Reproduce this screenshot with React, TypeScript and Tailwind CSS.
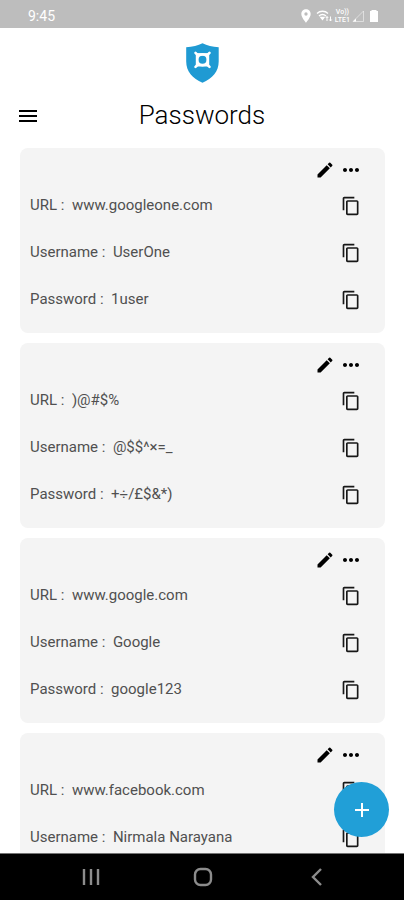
import { MdAdd, MdContentCopy, MdLocationOn, MdMenu, MdModeEdit, MdMoreHoriz } from "react-icons/md";

type Entry = {
  url: string;
  username: string;
  password?: string;
};

const entries: Entry[] = [
  { url: "www.googleone.com", username: "UserOne", password: "1user" },
  { url: ")@#$%", username: "@$$^×=_", password: "+÷/£$&*)" },
  { url: "www.google.com", username: "Google", password: "google123" },
  { url: "www.facebook.com", username: "Nirmala Narayana" },
];

function StatusBar() {
  return (
    <div className="flex h-7 shrink-0 items-center justify-between bg-[#bdbdbd] pt-1 pr-6 pl-7 text-white">
      <span className="text-sm font-normal">9:45</span>
      <div className="flex items-center gap-0.5">
        <MdLocationOn size={16} />
        <svg width="17" height="12" viewBox="0 0 17 12" fill="none" stroke="currentColor" strokeWidth="1.3">
          <path d="M1 3.500C4 .5 9 .5 12 3.500M3 6c2-2 5-2 7 0" />
          <path d="M5 7.500l1.500 2L8 7.500z" fill="currentColor" />
          <path d="M11 11V6.500M9.800 8L11 6.500 12.200 8M14.500 6.500V11M13.300 9.500l1.200 1.500 1.200-1.500" strokeWidth="1" />
        </svg>
        <div className="flex flex-col items-center text-[7px] leading-[8px] font-medium">
          <span>Vo))</span>
          <span>LTE1</span>
        </div>
        <svg width="12" height="12" viewBox="0 0 12 12">
          <path d="M11.500 1v10.500H1z" fill="none" stroke="currentColor" opacity=".5" />
          <path d="M4 8.500v3H1z" fill="currentColor" />
        </svg>
        <svg width="14" height="12" viewBox="0 0 14 12" fill="currentColor">
          <path d="M5.500 0h5v1H12v11H4V1h1.500z" />
        </svg>
      </div>
    </div>
  );
}

function Logo() {
  return (
    <svg width="34" height="40" viewBox="0 0 34 40" className="mx-auto">
      <path
        d="M17.500.3C13 2.600 7.500 4 1.200 4.200V18.500c0 10 6.300 16.800 16.300 21.200 10-4.400 16.200-11.200 16.200-21.200V4.200C27.500 4 22 2.600 17.500.3z"
        fill="#1f9ad3"
      />
      <g stroke="#fff" fill="none">
        <rect x="12" y="11.300" width="11" height="11" strokeWidth="2.400" />
        <circle cx="17.500" cy="16.800" r="5.300" strokeWidth="2.600" />
        <path d="M10.500 9.800l2.500 2.500M24.500 9.800L22 12.300M10.500 23.800l2.500-2.500M24.500 23.800L22 21.300" strokeWidth="2.600" strokeLinecap="round" />
      </g>
    </svg>
  );
}

function Field({ label, value }: { label: string; value: string }) {
  return (
    <div className="flex h-[47px] items-center justify-between">
      <p className="whitespace-pre text-[#505050]">
        {label} :{"  "}
        {value}
      </p>
      <button aria-label={`Copy ${label}`} className="flex w-6 justify-center text-neutral-900">
        <MdContentCopy size={20} />
      </button>
    </div>
  );
}

function PasswordCard({ entry }: { entry: Entry }) {
  return (
    <li className="rounded-lg bg-[#f4f4f4] py-2.5 pr-[22px] pl-2.5">
      <div className="flex h-6 items-center justify-end gap-1 text-black">
        <button aria-label="Edit">
          <MdModeEdit size={20} />
        </button>
        <button aria-label="More options">
          <MdMoreHoriz size={24} />
        </button>
      </div>
      <Field label="URL" value={entry.url} />
      <Field label="Username" value={entry.username} />
      {entry.password && <Field label="Password" value={entry.password} />}
    </li>
  );
}

function NavBar() {
  return (
    <nav className="grid h-[47px] shrink-0 grid-cols-[1fr_48px_1fr] items-center border-t border-neutral-500 bg-black pl-0.5 text-[#8c8c8c]">
      <button aria-label="Recent apps" className="flex justify-center">
        <svg width="18" height="18" viewBox="0 0 18 18" stroke="currentColor" strokeWidth="2.400">
          <path d="M2 1v16M9 1v16M16 1v16" />
        </svg>
      </button>
      <button aria-label="Home" className="flex justify-center">
        <svg width="20" height="20" viewBox="0 0 20 20" fill="none" stroke="currentColor" strokeWidth="2.400">
          <rect x="2" y="2" width="16" height="16" rx="5.500" />
        </svg>
      </button>
      <button aria-label="Back" className="flex justify-center">
        <svg width="18" height="18" viewBox="0 0 18 18" fill="none" stroke="currentColor" strokeWidth="2.400">
          <path d="M14 1L6 9l8 8" />
        </svg>
      </button>
    </nav>
  );
}

export default function App() {
  return (
    <div className="flex h-screen flex-col bg-white font-['Roboto',sans-serif] text-[15px]">
      <StatusBar />
      <div className="relative flex min-h-0 flex-1 flex-col">
        <header className="shrink-0 pt-[15px]">
          <Logo />
          <div className="grid h-[65px] grid-cols-[24px_1fr_24px] items-center px-4">
            <button aria-label="Menu" className="text-black">
              <MdMenu size={24} />
            </button>
            <h1 className="text-center text-[26px] font-light text-black">Passwords</h1>
          </div>
        </header>
        <ul className="flex min-h-0 flex-1 flex-col gap-2.5 overflow-hidden pr-[19px] pl-5">
          {entries.map((entry) => (
            <PasswordCard key={entry.url} entry={entry} />
          ))}
        </ul>
        <button
          aria-label="Add password"
          className="absolute right-[15px] bottom-4 flex size-[55px] items-center justify-center rounded-full bg-[#219fd7] text-white"
        >
          <MdAdd size={24} />
        </button>
      </div>
      <NavBar />
    </div>
  );
}
